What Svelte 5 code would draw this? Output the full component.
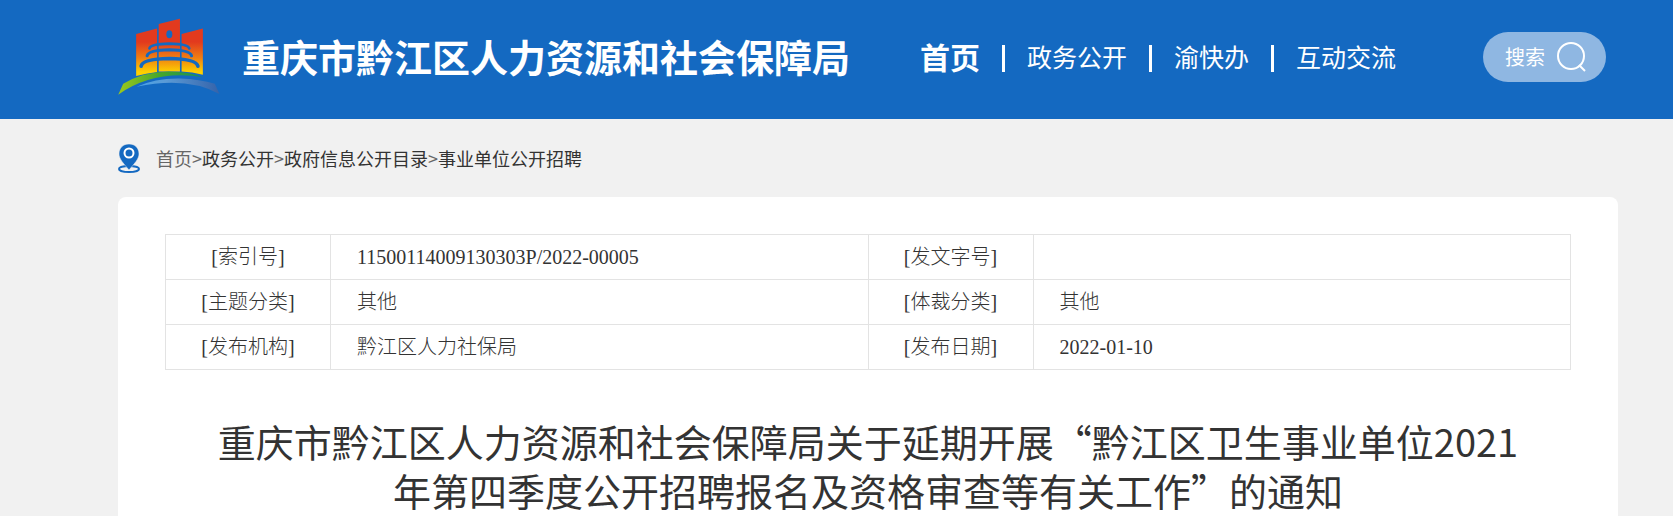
<script lang="ts">
	const nav = ['首页', '政务公开', '渝快办', '互动交流'];

	const crumbs = ['首页', '政务公开', '政府信息公开目录', '事业单位公开招聘'];

	const info = [
		['索引号', '11500114009130303P/2022-00005', '发文字号', ''],
		['主题分类', '其他', '体裁分类', '其他'],
		['发布机构', '黔江区人力社保局', '发布日期', '2022-01-10']
	];
</script>

<header>
	<a class="brand" href="#home">
		<svg class="logo" viewBox="53 55 312 232" aria-hidden="true">
			<defs>
				<linearGradient id="sun" gradientUnits="userSpaceOnUse" x1="0" y1="60" x2="0" y2="228">
					<stop offset="0.4" stop-color="#e23a1e" />
					<stop offset="0.68" stop-color="#ef7d13" />
					<stop offset="0.94" stop-color="#fdd000" />
				</linearGradient>
				<linearGradient id="hill">
					<stop offset="0" stop-color="#9cc81c" />
					<stop offset="0.5" stop-color="#45a62b" />
					<stop offset="1" stop-color="#14905a" />
				</linearGradient>
				<linearGradient id="river">
					<stop offset="0" stop-color="#4aa3e8" />
					<stop offset="0.35" stop-color="#5b9bd6" />
					<stop offset="1" stop-color="#3563aa" />
				</linearGradient>
			</defs>
			<g fill="url(#sun)">
				<path d="M107 103L170 87V218Q136 222 107 230Z" />
				<path d="M175 73L239 57V216H175Z" />
				<path d="M244 103L308 87V226Q276 217 244 216Z" />
			</g>
			<ellipse cx="207" cy="104" rx="9" ry="12" fill="#1469c1" />
			<g fill="none" stroke="#1469c1" stroke-linecap="round">
				<path stroke-width="8" d="M147 147Q149 133 207 132Q265 133 267 147" />
				<path stroke-width="9" d="M140 169Q144 152 207 151Q270 152 274 169" />
				<path stroke-width="11" d="M122 200Q126 178 207 177Q288 178 293 200" />
			</g>
			<path fill="url(#hill)" d="M53 286L68 253Q128 217 205 216Q268 217 308 233Q160 210 53 286Z" />
			<path fill="url(#river)" d="M108 262Q165 236 238 237Q300 239 344 253L358 284Q260 230 108 262Z" />
		</svg>
		<span class="name">重庆市黔江区人力资源和社会保障局</span>
	</a>
	<nav>
		{#each nav as item, i}
			<a href="#nav{i}" class:active={i === 0}>{item}</a>
		{/each}
	</nav>
	<button class="search" type="button">
		搜索
		<svg viewBox="0 0 30 30" aria-hidden="true">
			<circle cx="14" cy="14" r="13" />
			<path d="M22 23L28 29" />
		</svg>
	</button>
</header>

<main>
	<div class="crumbs">
		<svg viewBox="0 0 22 29" aria-hidden="true">
			<ellipse cx="11" cy="25" rx="10" ry="3" fill="none" stroke="#1469c1" stroke-width="2" />
			<path
				fill="#1469c1"
				stroke="#f1f1f1"
				stroke-width="0.5"
				d="M11 0C5 0 1 4 1 10C1 15 6 20 11 26C16 20 21 15 21 10C21 4 17 0 11 0Z"
			/>
			<circle cx="11" cy="9" r="4.5" fill="#1469c1" stroke="#fff" stroke-width="2" />
		</svg>
		<div>
			{#each crumbs as crumb, i}{#if i > 0}<span>&gt;</span>{/if}<a href="#crumb{i}">{crumb}</a>{/each}
		</div>
	</div>

	<article>
		<table>
			<tbody>
				{#each info as [labelA, valueA, labelB, valueB]}
					<tr>
						<th scope="row">[{labelA}]</th>
						<td>{valueA}</td>
						<th scope="row">[{labelB}]</th>
						<td>{valueB}</td>
					</tr>
				{/each}
			</tbody>
		</table>
		<h1>重庆市黔江区人力资源和社会保障局关于延期开展“黔江区卫生事业单位2021年第四季度公开招聘报名及资格审查等有关工作”的通知</h1>
	</article>
</main>

<style>
	:global(body) {
		margin: 0;
		background: #f1f1f1;
		font-family: 'Noto Sans CJK SC', sans-serif;
		color: #333;
	}

	a {
		color: inherit;
		text-decoration: none;
	}

	header {
		display: flex;
		align-items: center;
		box-sizing: border-box;
		height: 119px;
		padding: 0 67px 6px 118px;
		background: #1469c1;
		color: #fff;
		white-space: nowrap;
	}

	.brand {
		display: flex;
		align-items: center;
		gap: 20px;
	}

	.logo {
		width: 104px;
		height: 77px;
	}

	.name {
		padding-bottom: 2px;
		font-size: 38px;
		font-weight: 700;
		line-height: 56px;
	}

	nav {
		display: flex;
		align-items: center;
		margin-left: 70px;
		padding-bottom: 2px;
	}

	nav a {
		display: flex;
		align-items: center;
		font-size: 25px;
		line-height: 40px;
	}

	nav a.active {
		font-size: 30px;
		font-weight: 700;
	}

	nav a + a::before {
		content: '';
		width: 3px;
		height: 27px;
		margin: 6px 22px 0;
		background: #fff;
	}

	.search {
		display: flex;
		align-items: center;
		justify-content: center;
		gap: 12px;
		width: 123px;
		height: 50px;
		margin-left: auto;
		padding: 0 0 0 3px;
		border: 0;
		border-radius: 25px;
		background: #8fb7e2;
		color: #fff;
		font: inherit;
		font-size: 20px;
	}

	.search svg {
		width: 30px;
		height: 30px;
		fill: none;
		stroke: #fff;
		stroke-width: 2;
	}

	main {
		padding: 0 55px 0 118px;
	}

	.crumbs {
		display: flex;
		align-items: center;
		gap: 16px;
		height: 78px;
		font-size: 18px;
		line-height: 26px;
	}

	.crumbs svg {
		width: 22px;
		height: 29px;
	}

	.crumbs span,
	.crumbs a:first-child {
		color: #666;
	}

	article {
		padding: 37px 47px 2px;
		border-radius: 8px 8px 0 0;
		background: #fff;
	}

	table {
		width: 100%;
		border-collapse: collapse;
		table-layout: fixed;
		font-family: 'Liberation Serif', 'Noto Sans CJK SC', serif;
		font-size: 20px;
		line-height: 28px;
	}

	th,
	td {
		box-sizing: border-box;
		height: 45px;
		padding: 0;
		border: 1px solid #e3e3e3;
		font-weight: 300;
	}

	th {
		width: 165px;
	}

	td {
		padding-left: 26px;
	}

	h1 {
		margin: 0;
		padding: 46px 50px 0;
		font-size: 38px;
		font-weight: 400;
		line-height: 49px;
		text-align: center;
	}
</style>
